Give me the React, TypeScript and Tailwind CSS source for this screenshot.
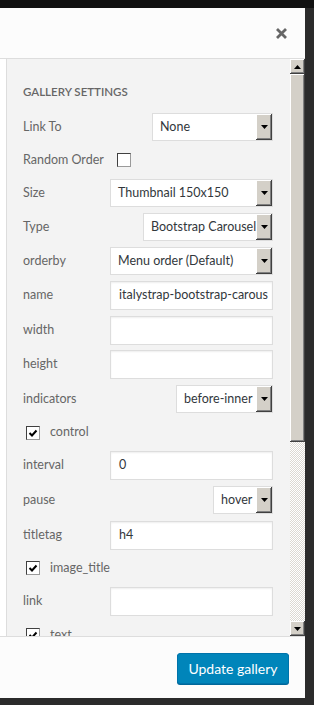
import React from 'react';

/* -------------------------------------------------------------------------- */
/*  Classic scrollbar / select bevel                                          */
/* -------------------------------------------------------------------------- */

const bevel =
  'bg-[#d4d0c8] shadow-[inset_-1px_-1px_0_#404040,inset_1px_1px_0_#ffffff,inset_-2px_-2px_0_#808080]';

function Tri({ up = false }: { up?: boolean }) {
  return (
    <svg width="7" height="4" viewBox="0 0 7 4" className="block">
      {up ? <path d="M0 4 L3.5 0 L7 4 Z" fill="#000" /> : <path d="M0 0 L7 0 L3.5 4 Z" fill="#000" />}
    </svg>
  );
}

function Select({ value, width }: { value: string; width: string }) {
  return (
    <div className={`flex h-[28px] items-stretch border border-[#ddd] bg-white ${width}`}>
      <span className="flex flex-1 items-center overflow-hidden whitespace-nowrap pl-[7px] text-[#32373c]">
        {value}
      </span>
      <span className={`flex w-[16px] shrink-0 items-center justify-center ${bevel}`}>
        <Tri />
      </span>
    </div>
  );
}

function Input({ value = '' }: { value?: string }) {
  return (
    <div className="flex h-[29px] w-[163px] items-center overflow-hidden whitespace-nowrap border border-[#ddd] bg-white pl-[8px] text-[#32373c] shadow-[inset_0_1px_2px_rgba(0,0,0,0.07)]">
      {value}
    </div>
  );
}

function Checkbox({ checked = false }: { checked?: boolean }) {
  return (
    <span className="flex h-[14px] w-[14px] shrink-0 items-center justify-center border border-[#9a9a9a] border-l-[#404040] border-t-[#404040] bg-white">
      {checked && (
        <svg width="10" height="10" viewBox="0 0 10 10">
          <path d="M1.5 5 L4 7.5 L8.5 2.5" fill="none" stroke="#000" strokeWidth="2" />
        </svg>
      )}
    </span>
  );
}

function Row({ label, h, children }: { label: string; h: string; children: React.ReactNode }) {
  return (
    <div className={`flex items-center ${h}`}>
      <span className="text-[#666]">{label}</span>
      <div className="ml-auto">{children}</div>
    </div>
  );
}

function CheckRow({ label, h }: { label: string; h: string }) {
  return (
    <div className={`flex items-center gap-[10px] pl-[3px] ${h}`}>
      <Checkbox checked />
      <span className="text-[#666]">{label}</span>
    </div>
  );
}

/* -------------------------------------------------------------------------- */
/*  Page                                                                      */
/* -------------------------------------------------------------------------- */

export default function App() {
  return (
    <div className="flex h-[705px] w-[314px] flex-col overflow-hidden bg-[#2b2b2b] font-['Lato',sans-serif] text-[12.5px]">
      <div className="h-[8px] shrink-0 bg-[#111]" />

      <div className="flex h-[690px] w-[305px] shrink-0 flex-col">
        {/* Header */}
        <div className="flex h-[51px] shrink-0 items-center justify-end border-b border-[#ddd] bg-[#fcfcfc] pr-[18px]">
          <svg width="11" height="11" viewBox="0 0 11 11">
            <path d="M1 1 L10 10 M10 1 L1 10" stroke="#666" strokeWidth="2.8" />
          </svg>
        </div>

        {/* Body */}
        <div className="flex h-[577px] shrink-0">
          <div className="w-[7px] shrink-0 border-r border-[#ddd] bg-white" />

          <div className="flex-1 overflow-hidden bg-[#f3f3f3] pl-[16px] pr-[17px] pt-[15px]">
            <div className="flex h-[36px] items-center text-[11.5px] font-semibold uppercase text-[#666]">
              Gallery Settings
            </div>

            <Row label="Link To" h="h-[34px]">
              <Select value="None" width="w-[121px]" />
            </Row>

            <div className="flex h-[32px] items-center">
              <span className="text-[#666]">Random Order</span>
              <span className="ml-[13px]">
                <Checkbox />
              </span>
            </div>

            <Row label="Size" h="h-[34px]">
              <Select value="Thumbnail 150x150" width="w-[163px]" />
            </Row>
            <Row label="Type" h="h-[34px]">
              <Select value="Bootstrap Carousel" width="w-[130px]" />
            </Row>
            <Row label="orderby" h="h-[34px]">
              <Select value="Menu order (Default)" width="w-[163px]" />
            </Row>
            <Row label="name" h="h-[35px]">
              <Input value="italystrap-bootstrap-carous" />
            </Row>
            <Row label="width" h="h-[34px]">
              <Input />
            </Row>
            <Row label="height" h="h-[35px]">
              <Input />
            </Row>
            <Row label="indicators" h="h-[34px]">
              <Select value="before-inner" width="w-[97px]" />
            </Row>

            <CheckRow label="control" h="h-[33px]" />

            <Row label="interval" h="h-[33px]">
              <Input value="0" />
            </Row>
            <Row label="pause" h="h-[36px]">
              <Select value="hover" width="w-[60px]" />
            </Row>
            <Row label="titletag" h="h-[34px]">
              <Input value="h4" />
            </Row>

            <CheckRow label="image_title" h="h-[32px]" />

            <Row label="link" h="h-[34px]">
              <Input />
            </Row>

            <CheckRow label="text" h="h-[34px]" />
          </div>

          {/* Scrollbar */}
          <div className="flex w-[15px] shrink-0 flex-col">
            <div className={`flex h-[15px] shrink-0 items-center justify-center ${bevel}`}>
              <Tri up />
            </div>
            <div className={`h-[368px] shrink-0 ${bevel}`} />
            <div className="flex-1 bg-[repeating-conic-gradient(#dcd9d2_0%_25%,#ffffff_0%_50%)] bg-[length:2px_2px]" />
            <div className={`flex h-[15px] shrink-0 items-center justify-center ${bevel}`}>
              <Tri />
            </div>
          </div>
        </div>

        {/* Footer */}
        <div className="flex h-[62px] shrink-0 justify-end border-t border-[#ddd] bg-[#fcfcfc] pr-[16px] pt-[16px]">
          <button className="h-[31px] w-[112px] rounded-[3px] border border-[#0073aa] bg-[#0085ba] text-[14px] text-white shadow-[0_1px_0_#006799]">
            Update gallery
          </button>
        </div>
      </div>
    </div>
  );
}
